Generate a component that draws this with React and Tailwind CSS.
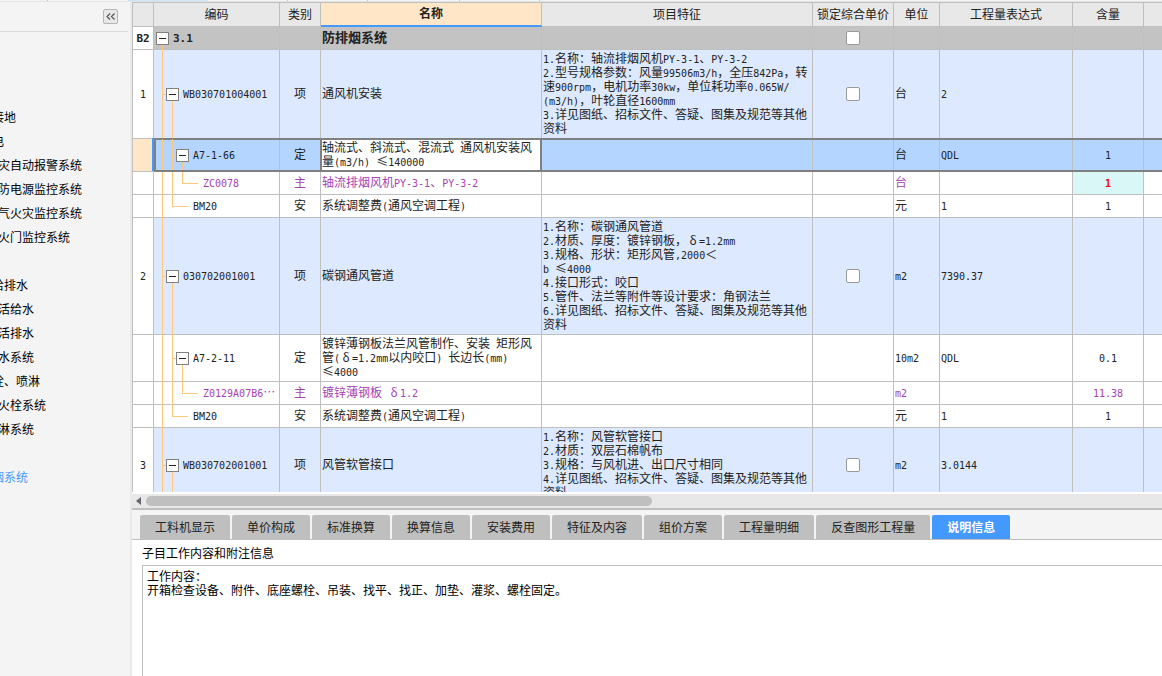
import { useState } from "react";
import clsx from "clsx";

const SECTIONS = [
    { name: "接地", depth: 1 },
    { name: "电", depth: 1 },
    { name: "灾自动报警系统", depth: 2 },
    { name: "防电源监控系统", depth: 2 },
    { name: "气火灾监控系统", depth: 2 },
    { name: "火门监控系统", depth: 2 },
    { name: "", depth: 0 },
    { name: "给排水", depth: 1 },
    { name: "活给水", depth: 2 },
    { name: "活排水", depth: 2 },
    { name: "水系统", depth: 2 },
    { name: "栓、喷淋", depth: 1 },
    { name: "火栓系统", depth: 2 },
    { name: "淋系统", depth: 2 },
    { name: "", depth: 0 },
    { name: "烟系统", depth: 1, active: true },
];

const COLUMNS = [
    { title: "", width: "w-[22px]" },
    { title: "编码", width: "w-[126px]" },
    { title: "类别", width: "w-[41px]" },
    { title: "名称", width: "w-[221px]", current: true },
    { title: "项目特征", width: "w-[271px]" },
    { title: "锁定综合单价", width: "w-[81px]" },
    { title: "单位", width: "w-[46px]" },
    { title: "工程量表达式", width: "w-[133px]" },
    { title: "含量", width: "w-[71px]" },
    { title: "", width: "" },
];

const ROWS = [
    { no: "B2", kind: "section", level: 0, code: "3.1", name: "防排烟系统", lock: true },
    {
        no: "1", kind: "item", level: 1, code: "WB030701004001", type: "项", name: "通风机安装",
        feature: "1.名称：轴流排烟风机PY-3-1、PY-3-2\n2.型号规格参数：风量99506m3/h，全压842Pa，转\n速900rpm，电机功率30kw，单位耗功率0.065W/\n(m3/h)，叶轮直径1600mm\n3.详见图纸、招标文件、答疑、图集及规范等其他\n资料",
        lock: true, unit: "台", expr: "2",
    },
    {
        no: "", kind: "selected", level: 2, code: "A7-1-66", type: "定",
        name: "轴流式、斜流式、混流式 通风机安装风\n量(m3/h) ≤140000", unit: "台", expr: "QDL", qty: "1",
    },
    { no: "", kind: "material", level: 3, code: "ZC0078", type: "主", name: "轴流排烟风机PY-3-1、PY-3-2", unit: "台", qty: "1", changed: true },
    { no: "", kind: "fee", level: 2, code: "BM20", type: "安", name: "系统调整费(通风空调工程)", unit: "元", expr: "1", qty: "1" },
    {
        no: "2", kind: "item", level: 1, code: "030702001001", type: "项", name: "碳钢通风管道",
        feature: "1.名称：碳钢通风管道\n2.材质、厚度：镀锌钢板，δ=1.2mm\n3.规格、形状：矩形风管,2000＜\nb ≤4000\n4.接口形式：咬口\n5.管件、法兰等附件等设计要求：角钢法兰\n6.详见图纸、招标文件、答疑、图集及规范等其他\n资料",
        lock: true, unit: "m2", expr: "7390.37",
    },
    {
        no: "", kind: "quota", level: 2, code: "A7-2-11", type: "定",
        name: "镀锌薄钢板法兰风管制作、安装 矩形风\n管(δ=1.2mm以内咬口) 长边长(mm)\n≤4000", unit: "10m2", expr: "QDL", qty: "0.1",
    },
    { no: "", kind: "material", level: 3, code: "Z0129A07B6…", type: "主", name: "镀锌薄钢板 δ1.2", unit: "m2", qty: "11.38" },
    { no: "", kind: "fee", level: 2, code: "BM20", type: "安", name: "系统调整费(通风空调工程)", unit: "元", expr: "1", qty: "1" },
    {
        no: "3", kind: "item", level: 1, code: "WB030702001001", type: "项", name: "风管软管接口",
        feature: "1.名称：风管软管接口\n2.材质：双层石棉帆布\n3.规格：与风机进、出口尺寸相同\n4.详见图纸、招标文件、答疑、图集及规范等其他\n资料",
        lock: true, unit: "m2", expr: "3.0144",
    },
];

const TABS = ["工料机显示", "单价构成", "标准换算", "换算信息", "安装费用", "特征及内容", "组价方案", "工程量明细", "反查图形工程量", "说明信息"];

const ROW_STYLE = {
    section: "bg-[#c3c3c3] font-bold text-[13px]",
    item: "bg-[#dde9fe]",
    selected: "bg-[#b3d5ff]",
    quota: "bg-white",
    material: "bg-white text-[#a63fb3]",
    fee: "bg-white",
};

const SELECTED_CELL =
    "before:absolute before:-top-px before:left-0 before:-right-px before:h-0.5 before:bg-[#808080] after:absolute after:-bottom-px after:left-0 after:-right-px after:h-0.5 after:bg-[#808080]";

// Half-width characters take half of a full-width one, as on a terminal grid
function GridText({ children, bold }) {
    if (!children) return null;
    return children.split(/([\x20-\x7e]+|δ|≤)/).map((part, i) => {
        if (i % 2 === 0) return part;
        if (part === "δ" || part === "≤") {
            return <span key={i} className="inline-block w-3 text-center leading-none">{part}</span>;
        }
        return (
            <span key={i} className={clsx("font-['DejaVu_Sans_Mono',monospace] leading-none", bold ? "text-[11px]" : "text-[10px]")}>
                {part}
            </span>
        );
    });
}

function Guide({ className }) {
    return <span className={clsx("absolute bg-[#ffc87d]", className)} />;
}

function Guides({ row }) {
    const { level, kind } = row;
    return (
        <>
            {level === 0 && <Guide className="left-2 top-1/2 -bottom-px w-px" />}
            {level > 0 && <Guide className="left-2 top-0 -bottom-px w-px" />}
            {level === 1 && <Guide className="left-2 top-1/2 w-2 h-px" />}
            {level === 1 && <Guide className="left-[18px] top-1/2 -bottom-px w-px" />}
            {level === 2 && kind !== "fee" && (
                <>
                    <Guide className="left-[18px] top-0 -bottom-px w-px" />
                    <Guide className="left-[18px] top-1/2 w-2 h-px" />
                    <Guide className="left-[28px] top-1/2 -bottom-px w-px" />
                </>
            )}
            {kind === "fee" && (
                <>
                    <Guide className="left-[18px] top-0 h-1/2 w-px" />
                    <Guide className="left-[18px] top-1/2 w-4 h-px" />
                </>
            )}
            {level === 3 && (
                <>
                    <Guide className="left-[18px] top-0 -bottom-px w-px" />
                    <Guide className="left-[28px] top-0 h-1/2 w-px" />
                    <Guide className="left-[28px] top-1/2 w-4 h-px" />
                </>
            )}
        </>
    );
}

const CODE_INDENT = ["pl-0.5", "pl-3", "pl-[22px]", "pl-[49px]"];

function CodeCell({ row }) {
    const leaf = row.kind === "fee" || row.kind === "material";
    return (
        <div className={clsx("flex items-center", row.kind === "fee" ? "pl-[39px]" : CODE_INDENT[row.level])}>
            {!leaf && (
                <button aria-label="折叠" className="relative z-10 mr-1 flex size-[13px] shrink-0 items-center justify-center border border-[#808080] bg-white">
                    <span className="h-px w-[7px] bg-[#222222]" />
                </button>
            )}
            <span className="pb-[3px] whitespace-nowrap"><GridText bold={row.kind === "section"}>{row.code}</GridText></span>
        </div>
    );
}

function Row({ row }) {
    const selected = row.kind === "selected";
    const bold = row.kind === "section";
    const base = clsx("relative border-b border-[#bfbfbf]", selected && SELECTED_CELL);
    const cell = clsx(base, "border-r px-px pb-0.5");
    return (
        <tr className={clsx("h-[23px]", ROW_STYLE[row.kind])}>
            <td className={clsx("relative border-x border-b border-[#bfbfbf] px-0 pb-0.5 text-center", selected ? "bg-[#ffe6c7]" : "bg-white")}>
                <GridText bold={bold}>{row.no}</GridText>
                {selected && <span className="absolute -top-px -right-px bottom-0 w-0.5 bg-[#4499ff]" />}
            </td>
            <td className={clsx(base, "border-r p-0")}>
                <Guides row={row} />
                <CodeCell row={row} />
                {selected && <span className="absolute inset-y-0 left-0 w-0.5 bg-[#808080]" />}
            </td>
            <td className={clsx(cell, "text-center")}>{row.type}</td>
            <td className={clsx("relative border-r border-b border-[#bfbfbf] px-px pt-px pb-[3px] whitespace-pre", selected && "bg-white")}>
                <GridText bold={bold}>{row.name}</GridText>
                {selected && <span className="absolute -inset-px border-2 border-[#808080]" />}
            </td>
            <td className={clsx(base, "border-r px-px pt-px pb-[3px] whitespace-pre")}><GridText>{row.feature}</GridText></td>
            <td className={clsx(base, "border-r p-0")}>
                {row.lock && (
                    <input
                        type="checkbox"
                        aria-label="锁定综合单价"
                        className="mx-auto block size-3.5 appearance-none rounded-xs border border-[#999999] bg-white checked:bg-[#4499ff]"
                    />
                )}
            </td>
            <td className={cell}><GridText>{row.unit}</GridText></td>
            <td className={cell}><GridText>{row.expr}</GridText></td>
            <td className={clsx(cell, "text-center", row.changed && "bg-[#daf7f8] font-bold text-[#ff0000]")}>
                <GridText>{row.qty}</GridText>
            </td>
            <td className={base} />
        </tr>
    );
}

function Sidebar() {
    return (
        <aside className="flex w-[132px] shrink-0 flex-col overflow-hidden border-r-2 border-[#e9e9e9] bg-[#f4f4f4]">
            <div className="mr-0.5 flex h-[30px] shrink-0 items-center justify-end border-b border-[#d9d9d9] pr-2.5">
                <button aria-label="收起" className="flex size-[15px] items-center justify-center rounded-xs border border-[#b5b5b5] bg-[#e8e8e8]">
                    <svg width="9" height="7" viewBox="0 0 9 7" fill="none" stroke="#555555" strokeWidth="1.2">
                        <path d="M4 .5 1 3.5 4 6.5M8.500 .5 5.500 3.5 8.500 6.5" />
                    </svg>
                </button>
            </div>
            <nav className="mt-[73px] flex flex-col">
                {SECTIONS.map((s, i) => (
                    <a
                        key={i}
                        href="#"
                        className={clsx("h-6 leading-6 whitespace-nowrap", s.depth === 1 ? "-ml-2" : "-ml-0.5", s.active ? "text-[#4499ff]" : "text-black")}
                    >
                        {s.name}
                    </a>
                ))}
            </nav>
        </aside>
    );
}

function BillTable() {
    return (
        <div className="min-h-0 flex-1 overflow-hidden">
            <table className="w-full min-w-[1020px] table-fixed border-separate border-spacing-0 border-t border-[#bfbfbf] text-[12px] leading-[14px] text-[#222222]">
                <thead>
                    <tr className="h-6 bg-[#e8e8e8]">
                        {COLUMNS.map((c, i) => (
                            <th
                                key={i}
                                className={clsx(
                                    "px-0 pb-0.5 whitespace-nowrap border-[#bfbfbf]",
                                    c.width,
                                    i === 0 && "border-l",
                                    i < COLUMNS.length - 1 && "border-r",
                                    c.current ? "border-b-2 border-b-[#4499ff] bg-[#ffe6c7] font-bold" : "border-b font-normal"
                                )}
                            >
                                {c.title}
                            </th>
                        ))}
                    </tr>
                </thead>
                <tbody>
                    {ROWS.map((row, i) => <Row key={i} row={row} />)}
                </tbody>
            </table>
        </div>
    );
}

function ScrollBar() {
    return (
        <div className="flex h-[18px] shrink-0 items-center border-t-2 border-b-2 border-t-white border-b-[#bfbfbf] bg-[#e8e8e8] pl-1">
            <svg width="5" height="8" viewBox="0 0 5 8" fill="#66666e"><path d="M5 0v8L0 4z" /></svg>
            <div className="ml-[5px] h-2.5 w-[49.3%] rounded-full bg-[#bfbfbf]" />
        </div>
    );
}

function DetailPanel() {
    const [tab, setTab] = useState("说明信息");
    return (
        <section className="flex h-[166px] shrink-0 flex-col bg-white">
            <div className="flex h-[30px] shrink-0 items-end gap-0.5 border-b border-[#bfbfbf] bg-[#f4f4f4] pl-2">
                {TABS.map((t) => (
                    <button
                        key={t}
                        onClick={() => setTab(t)}
                        className={clsx(
                            "h-6 rounded-t-xs px-[15px] whitespace-nowrap",
                            t === tab ? "bg-[#4499ff] font-bold text-white" : "bg-[#bfbfbf] text-[#222222]"
                        )}
                    >
                        {t}
                    </button>
                ))}
            </div>
            <label htmlFor="note" className="h-[25px] pl-2.5 leading-[25px] text-black">子目工作内容和附注信息</label>
            <textarea
                id="note"
                readOnly
                className="ml-2.5 flex-1 resize-none border-t border-l border-[#bfbfbf] bg-white px-1 py-[3px] leading-[14px] text-black outline-none"
                value={"工作内容：\n开箱检查设备、附件、底座螺栓、吊装、找平、找正、加垫、灌浆、螺栓固定。"}
            />
        </section>
    );
}

export default function App() {
    return (
        <div lang="zh-CN" className="flex h-screen flex-col overflow-hidden bg-white font-['Noto_Sans_CJK_SC',sans-serif] text-[12px]">
            {/* bottom edge of the document tabs */}
            <div className="flex h-0.5 shrink-0 border-b border-[#e4e4e4] bg-[#f4f4f4]">
                <div className="w-12 border-r border-[#bfbfbf]" />
                <div className="w-20" />
                <div className="w-20 bg-[#c8e4fc]" />
                <div className="w-20 border-r border-[#bfbfbf]" />
                <div className="w-20 border-r border-[#bfbfbf]" />
                <div className="w-[92px] border-r border-[#bfbfbf]" />
                <div className="w-20 border-r border-[#bfbfbf]" />
            </div>
            <div className="flex min-h-0 flex-1">
                <Sidebar />
                <main className="flex min-w-0 flex-1 flex-col">
                    <BillTable />
                    <ScrollBar />
                    <DetailPanel />
                </main>
            </div>
        </div>
    );
}
